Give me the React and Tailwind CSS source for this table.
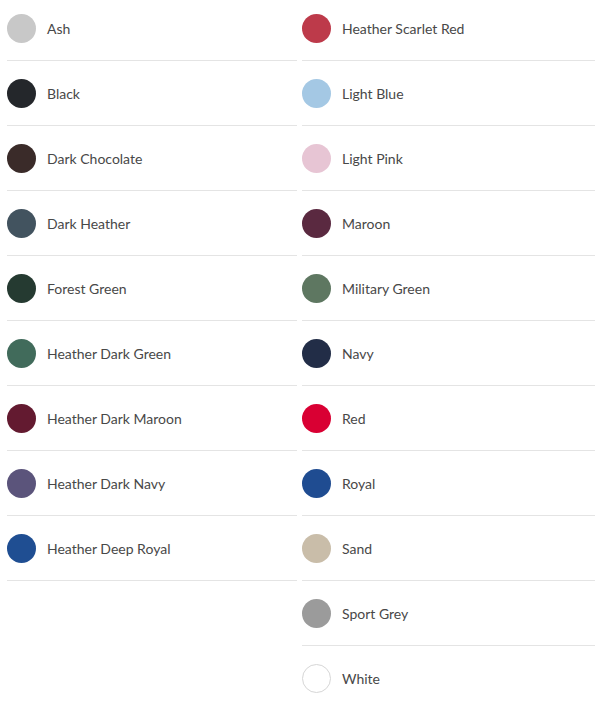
const left = [
  ['Ash', '#c8c8c8'],
  ['Black', '#24272b'],
  ['Dark Chocolate', '#3a2b29'],
  ['Dark Heather', '#42535f'],
  ['Forest Green', '#253a31'],
  ['Heather Dark Green', '#416b5b'],
  ['Heather Dark Maroon', '#631a30'],
  ['Heather Dark Navy', '#5b547b'],
  ['Heather Deep Royal', '#1f4e92'],
];

const right = [
  ['Heather Scarlet Red', '#bd3a4a'],
  ['Light Blue', '#a4c8e4'],
  ['Light Pink', '#e7c5d4'],
  ['Maroon', '#5a2940'],
  ['Military Green', '#5e7761'],
  ['Navy', '#222d47'],
  ['Red', '#d90033'],
  ['Royal', '#1f4c91'],
  ['Sand', '#c9bda9'],
  ['Sport Grey', '#9b9b9b'],
  ['White', '#ffffff'],
];

function Swatch({ name, color }) {
  const white = color === '#ffffff';
  return (
    <li className="flex items-center h-[65px] border-b border-[#e4e4e4] gap-[11px]">
      <span
        className={`w-[29px] h-[29px] rounded-full shrink-0 ${white ? 'border border-[#d6d6d6]' : ''}`}
        style={{ backgroundColor: color }}
      />
      <span className="text-[14px] text-[#484848]">{name}</span>
    </li>
  );
}

export default function App() {
  return (
    <div className="bg-white min-h-screen font-['Lato',sans-serif] overflow-hidden">
      <div className="grid grid-cols-[290px_1fr] gap-[5px] pl-[7px] -mt-[4px]">
        <ul>
          {left.map(([n, c]) => <Swatch key={n} name={n} color={c} />)}
        </ul>
        <ul>
          {right.map(([n, c]) => <Swatch key={n} name={n} color={c} />)}
        </ul>
      </div>
    </div>
  );
}
